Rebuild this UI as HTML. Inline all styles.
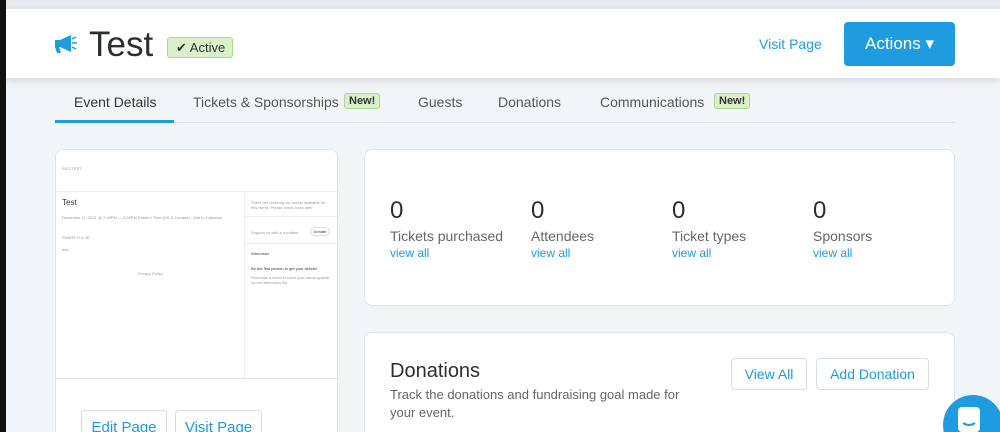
<!DOCTYPE html>
<html><head><meta charset="utf-8"><style>
*{margin:0;padding:0;box-sizing:border-box}
html,body{width:1000px;height:432px;overflow:hidden}
body{background:#f2f5f8;font-family:"Liberation Sans",sans-serif;position:relative;color:#333}
.a{position:absolute}
.blue{color:#1f9be0}
.hdr{left:6px;top:9px;width:994px;height:69px;background:#fff;box-shadow:0 3px 8px rgba(0,0,0,.12)}
.new{background:#d9f0c9;border:1px solid #a9d98e;border-radius:3px;font-size:11px;color:#333;padding:1px 4px;font-weight:bold}
.tab{font-size:14px;color:#555;top:94px}
.card{background:#fff;border:1px solid #dfe3e8;border-radius:8px}
.num{font-size:24px;color:#2b2f33}
.lbl{font-size:14px;color:#666}
.va{font-size:12px;color:#1f9be0}
.btn{background:#fff;border:1px solid #d6dde3;border-radius:4px;color:#1f9be0;font-size:14px;text-align:center}
.t{font-size:4px;color:#999}
</style></head><body>
<div class="a" style="left:0;top:0;width:6px;height:432px;background:#111"></div>
<div class="a" style="left:6px;top:0;width:994px;height:9px;background:#e8eaed"></div>
<div class="a hdr"></div>
<svg class="a" style="left:54px;top:34px" width="24" height="20" viewBox="0 0 24 20"><path d="M1 6h5l11-5v17L6 13H5l2 6H3L1 13z" fill="#1f9be0"/><path d="M18 5l4-2M18 9h5M18 13l4 2" stroke="#1f9be0" stroke-width="1.5"/></svg>
<div class="a" style="left:89px;top:25px;font-size:35px;color:#2b2f33">Test</div>
<div class="a" style="left:167px;top:37px;width:66px;height:21px;background:#d9f0c9;border:1px solid #a9d98e;border-radius:3px;font-size:13px;color:#333;padding:2px 0 0 8px">✔ Active</div>
<div class="a blue" style="left:759px;top:36px;font-size:14px">Visit Page</div>
<div class="a" style="left:844px;top:22px;width:111px;height:44px;background:#1f9be0;border-radius:4px;color:#fff;font-size:17px;text-align:center;line-height:44px">Actions ▾</div>

<div class="a tab" style="left:74px;color:#333">Event Details</div>
<div class="a tab" style="left:193px">Tickets &amp; Sponsorships</div>
<div class="a new" style="left:344px;top:93px">New!</div>
<div class="a tab" style="left:418px">Guests</div>
<div class="a tab" style="left:498px">Donations</div>
<div class="a tab" style="left:600px">Communications</div>
<div class="a new" style="left:714px;top:93px">New!</div>
<div class="a" style="left:55px;top:122px;width:900px;height:1px;background:#dde1e5"></div>
<div class="a" style="left:55px;top:120px;width:119px;height:3px;background:#1f9be0"></div>

<div class="a card" style="left:55px;top:149px;width:283px;height:300px"></div>
<div class="a" style="left:56px;top:191px;width:281px;height:1px;background:#eee"></div>
<div class="a" style="left:56px;top:378px;width:281px;height:1px;background:#e5e5e5"></div>
<div class="a" style="left:244px;top:192px;width:1px;height:186px;background:#eee"></div>
<div class="a t" style="left:62px;top:166px">SSO TEST</div>
<div class="a" style="left:62px;top:198px;font-size:8px;color:#333">Test</div>
<div class="a t" style="left:62px;top:215px">December 11, 2021 @ 2:40PM — 3:40PM Eastern Time (US &amp; Canada) · Add to Calendar</div>
<div class="a t" style="left:62px;top:235px">SHARE  f  t  in  ✉</div>
<div class="a t" style="left:62px;top:247px">test</div>
<div class="a t" style="left:138px;top:271px">Privacy Policy</div>
<div class="a t" style="left:251px;top:200px;width:80px">There are currently no tickets available for this event. Please check back later.</div>
<div class="a" style="left:245px;top:216px;width:92px;height:1px;background:#eee"></div>
<div class="a t" style="left:251px;top:230px">Support us with a donation.</div>
<div class="a" style="left:310px;top:227px;width:20px;height:9px;border:1px solid #ddd;border-radius:5px;font-size:4px;color:#333;text-align:center;line-height:7px">Donate</div>
<div class="a" style="left:245px;top:243px;width:92px;height:1px;background:#eee"></div>
<div class="a t" style="left:251px;top:251px;color:#444">Attendees</div>
<div class="a t" style="left:251px;top:266px;color:#333">Be the first person to get your tickets!</div>
<div class="a t" style="left:251px;top:275px;width:80px">Purchase a ticket to have your name appear on our attendees list.</div>
<div class="a btn" style="left:81px;top:410px;width:86px;height:40px;line-height:34px;font-size:15px">Edit Page</div>
<div class="a btn" style="left:175px;top:410px;width:87px;height:40px;line-height:34px;font-size:15px">Visit Page</div>

<div class="a card" style="left:364px;top:149px;width:591px;height:157px"></div>
<div class="a num" style="left:390px;top:197px">0</div>
<div class="a lbl" style="left:390px;top:228px">Tickets purchased</div>
<div class="a va" style="left:390px;top:246px">view all</div>
<div class="a num" style="left:531px;top:197px">0</div>
<div class="a lbl" style="left:531px;top:228px">Attendees</div>
<div class="a va" style="left:531px;top:246px">view all</div>
<div class="a num" style="left:672px;top:197px">0</div>
<div class="a lbl" style="left:672px;top:228px">Ticket types</div>
<div class="a va" style="left:672px;top:246px">view all</div>
<div class="a num" style="left:813px;top:197px">0</div>
<div class="a lbl" style="left:813px;top:228px">Sponsors</div>
<div class="a va" style="left:813px;top:246px">view all</div>

<div class="a card" style="left:364px;top:332px;width:591px;height:120px"></div>
<div class="a" style="left:390px;top:360px;font-size:20px;color:#2b2f33">Donations</div>
<div class="a" style="left:390px;top:386px;font-size:13px;color:#666;width:305px;line-height:18px">Track the donations and fundraising goal made for your event.</div>
<div class="a btn" style="left:731px;top:358px;width:76px;height:32px;line-height:30px">View All</div>
<div class="a btn" style="left:816px;top:358px;width:113px;height:32px;line-height:30px">Add Donation</div>
<div class="a" style="left:943px;top:395px;width:60px;height:60px;border-radius:50%;background:#1f9be0"></div>
<svg class="a" style="left:955px;top:405px" width="30" height="27" viewBox="0 0 30 27"><rect x="3" y="2" width="22" height="25" rx="4" fill="#fff"/><path d="M8 18q6 4 12 0" stroke="#1f9be0" stroke-width="2" fill="none"/></svg>
</body></html>
